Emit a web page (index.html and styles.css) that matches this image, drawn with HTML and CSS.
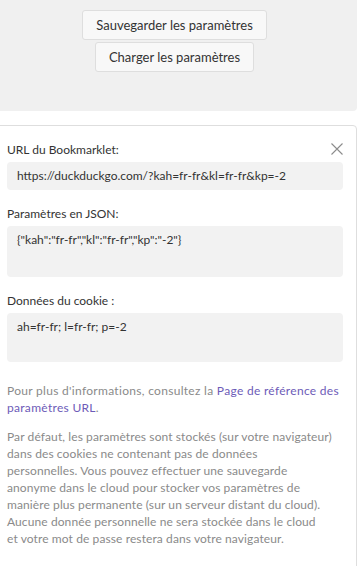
FILE: index.html
```html
<!DOCTYPE html>
<html lang="fr">
<head>
  <meta charset="UTF-8">
  <meta name="viewport" content="width=device-width, initial-scale=1.0">
  <title>Paramètres</title>
  <link rel="stylesheet" href="styles.css">
</head>
<body>
  <div class="cloud-panel">
    <button class="btn" type="button">Sauvegarder les paramètres</button>
    <button class="btn" type="button">Charger les paramètres</button>
  </div>

  <div class="card">
    <button class="close" type="button" aria-label="Fermer">
      <svg width="12" height="12" viewBox="0 0 12 12">
        <path d="M0.5 0.5 L11.5 11.5 M11.5 0.5 L0.5 11.5" stroke="#8c8c8c" stroke-width="1.1" fill="none"/>
      </svg>
    </button>

    <div class="field">
      <label>URL du Bookmarklet:</label>
      <div class="value">https://duckduckgo.com/?kah=fr-fr&amp;kl=fr-fr&amp;kp=-2</div>
    </div>

    <div class="field">
      <label>Paramètres en JSON:</label>
      <div class="value tall">{"kah":"fr-fr","kl":"fr-fr","kp":"-2"}</div>
    </div>

    <div class="field">
      <label>Données du cookie :</label>
      <div class="value tall short">ah=fr-fr; l=fr-fr; p=-2</div>
    </div>

    <p class="note wide">Pour plus d'informations, consultez la <a href="#">Page de référence des paramètres URL</a>.</p>

    <p class="note nowrap">Par défaut, les paramètres sont stockés (sur votre navigateur)<br>
      dans des cookies ne contenant pas de données<br>
      personnelles. Vous pouvez effectuer une sauvegarde<br>
      anonyme dans le cloud pour stocker vos paramètres de<br>
      manière plus permanente (sur un serveur distant du cloud).<br>
      Aucune donnée personnelle ne sera stockée dans le cloud<br>
      et votre mot de passe restera dans votre navigateur.</p>
  </div>
</body>
</html>
```

FILE: styles.css
```css
:root {
  --text: #333;
  --muted: #8a8a8a;
  --panel: #f0f0f0;
  --field: #f2f2f2;
  --border: #dedede;
  --link: #6d5bb8;
}

body {
  margin: 0;
  font-family: 'Lato', sans-serif;
  font-size: 12px;
  color: var(--text);
  background: white;
}

.cloud-panel {
  background: var(--panel);
  margin-right: 4px;
  border-radius: 0 0 4px 0;
  height: 111px;
  padding: 10px 8px 0 0;
  box-sizing: border-box;
  display: flex;
  flex-direction: column;
  align-items: center;
  gap: 2px;
}

.btn {
  font-family: inherit;
  font-size: 13px;
  color: var(--text);
  background: #f8f8f8;
  border: 1px solid var(--border);
  border-radius: 3px;
  height: 30px;
  padding: 0 13px;
}

.card {
  position: relative;
  margin: 14px 4px 0 -4px;
  border: 1px solid var(--border);
  border-radius: 0 4px 0 0;
  padding: 15px 13px 10px 10px;
}

.close {
  position: absolute;
  top: 17px;
  right: 13px;
  padding: 0;
  border: none;
  background: none;
  line-height: 0;
}

.field {
  margin-bottom: 15px;
}

.field label {
  display: block;
  line-height: 17px;
  margin-bottom: 4px;
}

.value {
  background: var(--field);
  border-radius: 4px;
  padding: 6px 10px;
  line-height: 16px;
  min-height: 16px;
}

.value.tall {
  min-height: 39px;
}

.value.short {
  min-height: 37px;
}

.note {
  color: var(--muted);
  line-height: 17px;
  margin: 0 0 12px;
}

.note.wide {
  letter-spacing: 0.3px;
}

.note.nowrap {
  white-space: nowrap;
  letter-spacing: 0.1px;
}

.field + .note {
  margin-top: 20px;
}

.note a {
  color: var(--link);
  text-decoration: none;
}
```
